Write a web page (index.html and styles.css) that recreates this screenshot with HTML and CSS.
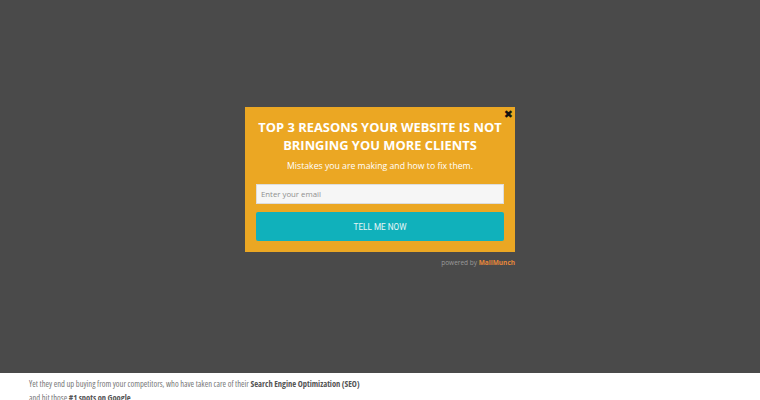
FILE: index.html
```html
<!DOCTYPE html>
<html lang="en">
<head>
    <meta charset="UTF-8">
    <meta name="viewport" content="width=device-width, initial-scale=1.0">
    <title>Top 3 Reasons</title>
    <link rel="stylesheet" href="styles.css">
</head>
<body>
    <div class="overlay">
        <div class="popup-wrap">
            <div class="popup">
                <span class="close">&#10006;</span>
                <h1>TOP 3 REASONS YOUR WEBSITE IS NOT BRINGING YOU MORE CLIENTS</h1>
                <p class="sub">Mistakes you are making and how to fix them.</p>
                <input type="email" placeholder="Enter your email">
                <button>TELL ME NOW</button>
            </div>
            <div class="powered">powered by <b>MailMunch</b></div>
        </div>
    </div>

    <div class="content">
        <p>Yet they end up buying from your competitors, who have taken care of their <b>Search Engine Optimization (SEO)</b></p>
        <p>and hit those <b>#1 spots on Google</b>.</p>
    </div>
</body>
</html>
```

FILE: styles.css
```css
body {
    margin: 0;
    font-family: "Open Sans", sans-serif;
    background: #fff;
}
.overlay {
    height: 373px;
    background-color: #4a4a4a;
    display: flex;
    justify-content: center;
    padding-top: 107px;
    box-sizing: border-box;
}
.popup-wrap {
    width: 270px;
}
.popup {
    position: relative;
    background-color: #eba723;
    padding: 11px 11px 11px;
    text-align: center;
}
.close {
    position: absolute;
    top: 2px;
    right: 2px;
    font-size: 11px;
    line-height: 12px;
    color: #111;
    font-family: "DejaVu Sans", sans-serif;
}
.popup h1 {
    margin: 0 -4px;
    color: #fff;
    font-size: 12.9px;
    line-height: 18px;
    font-weight: 700;
}
.sub {
    margin: 6px 0 12px;
    color: #fff;
    font-size: 8.7px;
    line-height: 12px;
}
.popup input {
    display: block;
    width: 100%;
    box-sizing: border-box;
    height: 20px;
    border: 1px solid #ddd;
    background: #f6f6f6;
    padding: 0 4px;
    font-family: "Open Sans", sans-serif;
    font-size: 7.8px;
    color: #888;
}
.popup input::placeholder {
    color: #8f8f8f;
}
.popup button {
    display: block;
    width: 100%;
    height: 29px;
    margin-top: 8px;
    background-color: #10b1bb;
    color: #e6f6f7;
    border: none;
    border-radius: 2px;
    font-family: Roboto, sans-serif;
    font-size: 8.2px;
}
.powered {
    text-align: right;
    margin-top: 6px;
    font-size: 6.5px;
    color: #9a9a9a;
}
.powered b {
    color: #e7883a;
}
.content {
    padding: 4px 29px 0;
}
.content p {
    margin: 0;
    font-family: "Open Sans", sans-serif;
    font-stretch: 87.5%;
    font-size: 8.5px;
    line-height: 14px;
    color: #777;
}
.content b {
    color: #555;
}
```
